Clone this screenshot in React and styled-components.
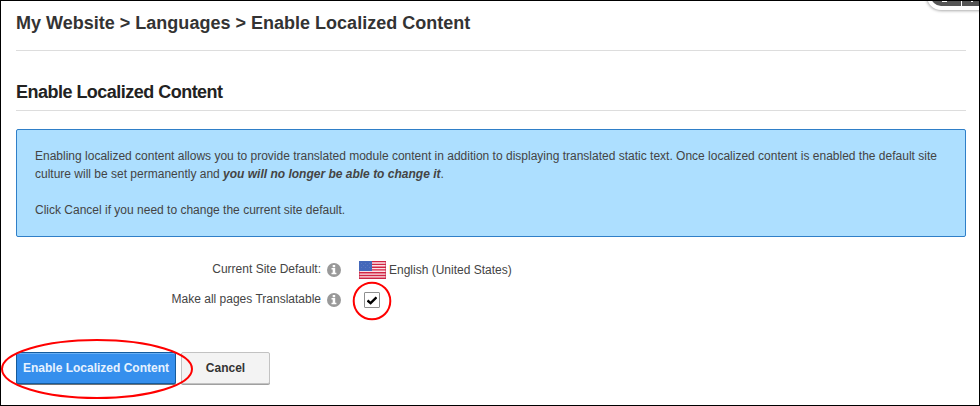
import React from "react";
import styled, { createGlobalStyle } from "styled-components";

const GlobalStyle = createGlobalStyle`
  *, *::before, *::after { box-sizing: border-box; }
  body { margin: 0; background: #fff; }
`;

const Page = styled.main`
  position: relative;
  width: 980px;
  height: 406px;
  overflow: hidden;
  border: 1px solid #000;
  padding: 0 13px 0 15px;
  background: #fff;
  color: #444;
  font: 12px/18px "Liberation Sans", Arial, sans-serif;
`;

const Breadcrumb = styled.h1`
  margin: 0;
  height: 50px;
  padding-top: 10px;
  border-bottom: 1px solid #ddd;
  color: #333;
  font-size: 18px;
  line-height: 24px;
  letter-spacing: 0.01px;
  white-space: nowrap;
`;

const SectionTitle = styled.h2`
  margin: 0 0 18px;
  height: 60px;
  padding-top: 29px;
  border-bottom: 1px solid #ddd;
  color: #222;
  font-size: 18px;
  line-height: 24px;
  letter-spacing: -0.52px;
  white-space: nowrap;
`;

const Notice = styled.section`
  height: 108px;
  padding: 17px 18px;
  border: 1px solid #2f7fc8;
  border-radius: 2px;
  background: #addfff;
`;

const Paragraph = styled.p`
  margin: 0 0 18px;
  white-space: nowrap;
`;

const Line = styled.span`
  display: block;
`;

const Form = styled.div`
  display: grid;
  grid-template-columns: 305px 22px auto;
  grid-template-rows: 30px 30px;
  height: 60px;
  margin-top: 22px;
`;

const Label = styled.label`
  padding-top: 1px;
  text-align: right;
  white-space: nowrap;
`;

const InfoSvg = styled.svg`
  display: block;
  width: 14px;
  height: 14px;
  margin: 4px 0 0 6px;
`;

const Value = styled.div`
  display: flex;
  align-items: flex-start;
  gap: 3px;
  padding: 2px 0 0 16px;
`;

const FlagSvg = styled.svg`
  display: block;
  width: 27px;
  height: 18px;
`;

const CheckBox = styled.span`
  position: relative;
  display: flex;
  align-items: center;
  justify-content: center;
  width: 16px;
  height: 16px;
  margin: 1px 0 0 5px;
  border: 1px solid #8e8f8f;
  border-radius: 1px;
  background: #fff;
`;

const CheckRing = styled.svg`
  position: absolute;
  left: -13px;
  top: -12px;
  width: 40px;
  height: 40px;
`;

const Actions = styled.div`
  position: relative;
  display: flex;
  gap: 5px;
  margin-top: 33px;
`;

const Button = styled.button`
  height: 32px;
  width: ${(p) => (p.$primary ? "160px" : "89px")};
  padding: 0;
  border: 1px solid ${(p) => (p.$primary ? "#155b9c" : "#c2c2c2")};
  border-radius: 2px;
  background: ${(p) => (p.$primary ? "#358fed" : "#f3f3f3")};
  box-shadow: ${(p) => (p.$primary ? "inset 0 1px 0 #69b0f5, 0 1px 0 #6f7478" : "0 1px 0 #a0a0a0")};
  color: ${(p) => (p.$primary ? "#e6f2ff" : "#333")};
  font: bold 12px/18px "Liberation Sans", Arial, sans-serif;
  white-space: nowrap;
`;

const ActionRing = styled.svg`
  position: absolute;
  left: -15px;
  top: -13px;
  width: 192px;
  height: 60px;
`;

const Toolbar = styled.div`
  position: absolute;
  right: -13px;
  top: -20px;
  width: 65px;
  height: 29px;
  padding: 4px;
  border-radius: 14px;
  background: #fff;
  box-shadow: 0 0 3px 1px #aaa;
`;

const ToolbarSvg = styled.svg`
  display: block;
  width: 57px;
  height: 21px;
`;

function InfoIcon() {
  return (
    <InfoSvg viewBox="0 0 14 14" aria-hidden="true">
      <circle cx="7" cy="7" r="7" fill="#999" />
      <path d="M5.700 2h2.500v2.200H5.700zM4.500 5h3.700v4.800h1.200V11.300H4.500V9.800h1.200V6.500H4.500z" fill="#fff" />
    </InfoSvg>
  );
}

function Flag() {
  return (
    <FlagSvg viewBox="0 0 27 18" aria-hidden="true">
      <path fill="#fbe4e8" d="M0 0h27v18H0z" />
      <path
        fill="#d22445"
        d="M0 0h27v1.200H0zM13 2.700h14v1.400H13zM13 5.500h14v1.400H13zM13 8.200h14v1.400H13zM0 11h27v1.400H0zM0 13.800h27v1.400H0zM0 16.600h27v1.400H0z"
      />
      <path fill="#4468ba" d="M0 0h13v10H0z" />
      <path fill="#5c78c0" d="M2 2h1v1H2zM6 2h1v1H6zM10 2h1v1h-1zM4 4h1v1H4zM8 4h1v1H8zM2 6h1v1H2zM6 6h1v1H6zM10 6h1v1h-1z" />
      <path fill="none" stroke="#c02848" strokeWidth="0.600" d="M0.300 10v7.700h26.400V0.300" />
    </FlagSvg>
  );
}

export default function App() {
  return (
    <>
      <GlobalStyle />
      <Page>
        <Breadcrumb>My Website &gt; Languages &gt; Enable Localized Content</Breadcrumb>
        <SectionTitle>Enable Localized Content</SectionTitle>
        <Notice>
          <Paragraph>
            <Line>
              Enabling localized content allows you to provide translated module content in addition to displaying
              translated static text. Once localized content is enabled the default site
            </Line>
            <Line>
              culture will be set permanently and <b><i>you will no longer be able to change it</i></b>.
            </Line>
          </Paragraph>
          <Paragraph>
            <Line>Click Cancel if you need to change the current site default.</Line>
          </Paragraph>
        </Notice>
        <Form>
          <Label>Current Site Default:</Label>
          <InfoIcon />
          <Value>
            <Flag />
            <span>English (United States)</span>
          </Value>
          <Label>Make all pages Translatable</Label>
          <InfoIcon />
          <Value>
            <CheckBox role="checkbox" aria-checked="true">
              <svg width="10" height="9" viewBox="0 0 10 9">
                <path d="M0.500 4.500 3.600 7.200 9.500 1.300" fill="none" stroke="#000" strokeWidth="2.400" />
              </svg>
              <CheckRing viewBox="0 0 40 40">
                <circle cx="20" cy="20" r="18.300" fill="none" stroke="#f00" strokeWidth="2" />
              </CheckRing>
            </CheckBox>
          </Value>
        </Form>
        <Actions>
          <Button $primary>Enable Localized Content</Button>
          <Button>Cancel</Button>
          <ActionRing viewBox="0 0 192 60">
            <ellipse cx="96" cy="30" rx="95" ry="29" fill="none" stroke="#f00" strokeWidth="2" />
          </ActionRing>
        </Actions>
        <Toolbar>
          <ToolbarSvg viewBox="0 0 57 21">
            <rect width="57" height="21" rx="10" fill="#555" />
            <path d="M30 0h1v21h-1zM11 15h5v2h-5zM40 15h2v2h-2z" fill="#fff" />
          </ToolbarSvg>
        </Toolbar>
      </Page>
    </>
  );
}
